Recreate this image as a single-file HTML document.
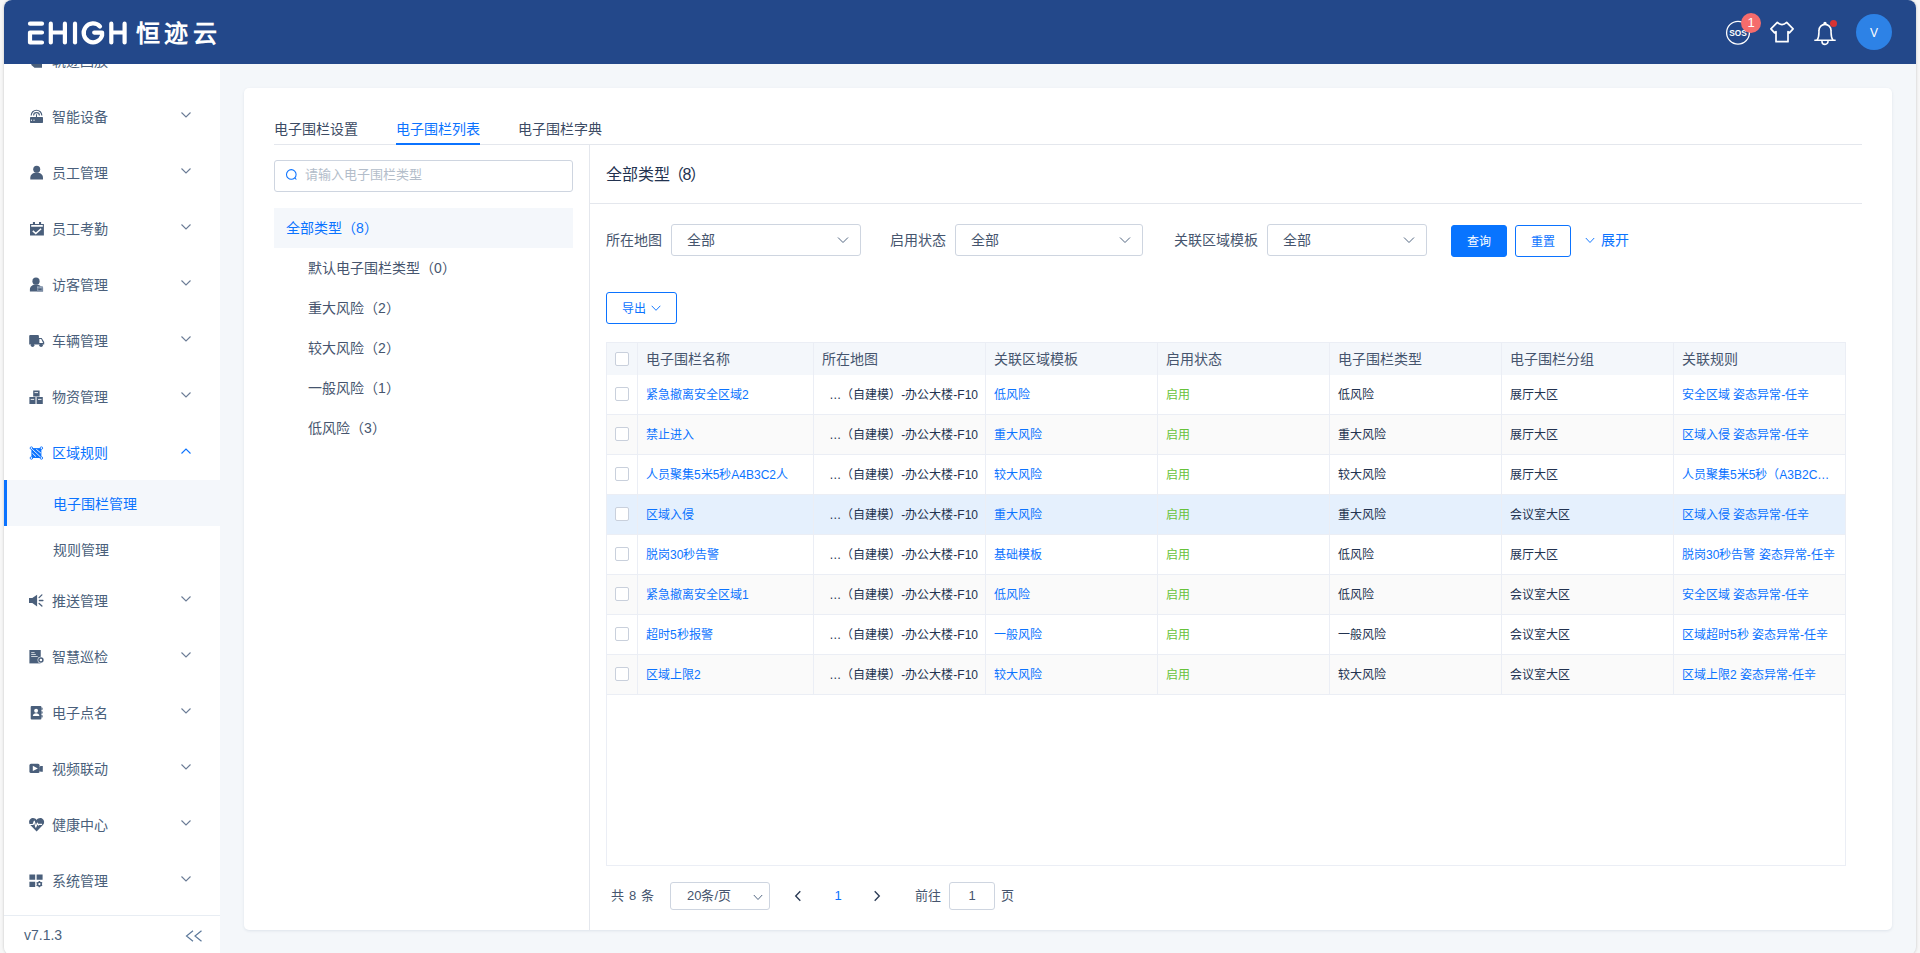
<!DOCTYPE html>
<html lang="zh-CN">
<head>
<meta charset="utf-8">
<title>电子围栏管理</title>
<style>
*{box-sizing:border-box;margin:0;padding:0}
html,body{width:1920px;height:953px;overflow:hidden;background:#f7f7f7;font-family:"Liberation Sans",sans-serif;font-size:14px;color:#303133}
.abs{position:absolute}
#frame{position:absolute;left:4px;top:0;width:1912px;height:955px;border-radius:8px;background:#f4f7fa;box-shadow:0 0 3px rgba(0,0,0,.22)}
/* header */
#hd{position:absolute;left:4px;top:0;width:1912px;height:64px;background:#23488a;border-radius:8px 8px 0 0;z-index:5}
#logo{position:absolute;left:24px;top:21px}
#brand{position:absolute;left:132px;top:17px;font-size:24px;line-height:34px;font-weight:bold;color:#fff;letter-spacing:4.4px;white-space:nowrap}
.hi{position:absolute;top:0}
#sosb{position:absolute;left:1737px;top:13px;width:20px;height:20px;border-radius:10px;background:#f56c6c;color:#fff;font-size:13px;line-height:20px;text-align:center}
#avatar{position:absolute;left:1852px;top:14px;width:36px;height:36px;border-radius:18px;background:#2d82e6;color:#fff;font-size:12px;line-height:38px;text-align:center}
#belldot{position:absolute;left:1826px;top:20px;width:7px;height:7px;border-radius:4px;background:#d73434}
/* sidebar */
#sb{position:absolute;left:4px;top:0;width:216px;height:955px;background:#fff;border-radius:8px 0 0 8px;z-index:1;overflow:hidden}
.mi{position:absolute;left:0;width:216px;height:56px;line-height:56px;color:#4a5f7b;font-size:14px}
.mi .ic{position:absolute;left:25px;top:20px;width:16px;height:16px}
.mi .tx{position:absolute;left:48px;top:0;white-space:nowrap}
.mi .ar{position:absolute;left:176px;top:22px;width:12px;height:8px}
.mi.on{color:#0b73ff}
.smi{position:absolute;left:0;width:216px;height:46px;line-height:48px;color:#4a5f7b;font-size:14px;padding-left:49px}
.smi.on{background:#f4f7fb;color:#0b73ff;border-left:3px solid #0b73ff;padding-left:46px}
#sbft{position:absolute;left:0;top:915px;width:216px;height:40px;border-top:1px solid #e8edf3;color:#4a5f7b;font-size:14px;line-height:39px;padding-left:20px}
/* card */
#card{position:absolute;left:244px;top:88px;width:1648px;height:842px;background:#fff;border-radius:5px;box-shadow:0 1px 3px rgba(30,60,100,.10)}
.tab{position:absolute;top:31px;height:20px;line-height:20px;font-size:14px;color:#3c4b64;white-space:nowrap}
.tab.on{color:#0b73ff}
#search{position:absolute;left:30px;top:72px;width:299px;height:32px;border:1px solid #ced5e0;border-radius:3px;background:#fff}
#search span{position:absolute;left:30px;top:0;line-height:28px;font-size:13px;color:#b3bdca;white-space:nowrap}
#troot{position:absolute;left:30px;top:120px;width:299px;height:40px;background:#f4f7fb;color:#0b73ff;font-size:14px;line-height:40px;padding-left:12px}
.tn{position:absolute;left:64px;height:40px;line-height:40px;font-size:14px;color:#46556e;white-space:nowrap}
#ttl{position:absolute;left:362px;top:73px;height:28px;line-height:28px;font-size:16px;color:#22324f;white-space:nowrap}
.lb{position:absolute;top:136px;height:32px;line-height:32px;font-size:14px;color:#46556e;white-space:nowrap}
.sel{position:absolute;top:136px;height:32px;border:1px solid #ced5e0;border-radius:3px;line-height:30px;font-size:14px;color:#46556e;padding-left:15px}
.sel .sa{position:absolute;right:11px;top:11px;width:12px;height:8px}
.btn{position:absolute;height:32px;border-radius:3px;font-size:12px;line-height:33px;text-align:center;white-space:nowrap}
.btn.pri{background:#0874ff;color:#fff;border:1px solid #0874ff}
.btn.pln{background:#fff;color:#0b73ff;border:1px solid #0b73ff}
#expand{position:absolute;left:1341px;top:137px;height:32px;line-height:30px;font-size:14px;color:#0b73ff;white-space:nowrap}
#tbw{position:absolute;left:362px;top:254px;width:1240px;height:524px;border-bottom:1px solid #ebeef5;border-left:1px solid #ebeef5}
#tbw table{position:absolute;left:0;top:0;width:1239px;border-collapse:separate;border-spacing:0;table-layout:fixed}
#tbw th{height:33px;background:#f4f7fb;font-weight:normal;font-size:14px;color:#46556e;text-align:left;padding:0 8px 2px 8px;border-right:1px solid #ebeef5;border-top:1px solid #ebeef5;white-space:nowrap;overflow:hidden}
#tbw td{height:40px;font-size:12px;color:#22324f;padding:0 8px 2px 8px;border-right:1px solid #ebeef5;border-bottom:1px solid #ebeef5;white-space:nowrap;overflow:hidden}
#tbw tr.st td{background:#fafafa}
#tbw tr.hv td{background:#e5f0fd}
#tbw td a{color:#0b73ff}
#tbw td.mp{text-align:right;padding-right:7px}
#tbw .ok{color:#67c23a}
#tbw th.ck{padding:0 0 3px 0;text-align:center}
#tbw td.ck{padding:0 0 1px 0;text-align:center}
.cb{display:inline-block;width:14px;height:14px;border:1px solid #c9d0dc;border-radius:2px;background:#fff;vertical-align:middle}
#pg{position:absolute;left:0;top:794px;width:1648px;height:28px;line-height:28px;font-size:13px;color:#46556e;white-space:nowrap}
.psel{position:absolute;left:426px;top:0;width:100px;height:28px;border:1px solid #ced5e0;border-radius:3px;line-height:26px;padding-left:16px}
.pin{position:absolute;left:705px;top:0;width:46px;height:28px;border:1px solid #ced5e0;border-radius:3px;line-height:26px;text-align:center}
.cnt{letter-spacing:-1.500px;margin-left:-2px}
</style>
</head>
<body>
<div id="frame"></div>
<div id="sb">
  <div class="mi" style="top:33px"><svg class="ic" viewBox="0 0 16 16"><path d="M2.300 9.500H5v1.500h8v3.700H5.500L2.300 12z" fill="#4a5f7b"/></svg><span class="tx">轨迹回放</span></div>
  <div class="mi" style="top:89px"><svg class="ic" viewBox="0 0 16 16"><rect x="1" y="8" width="13" height="6" rx=".700" fill="#4a5f7b"/><path d="M2.400 10.600v1.400M5 10.600v1.400" stroke="#fff" stroke-width=".900"/><path d="M7.500 5.200V8" stroke="#4a5f7b" stroke-width="1.100"/><path d="M2.200 6.500A5.300 5.300 0 0 1 12.800 6.500M4.600 6.500A2.900 2.900 0 0 1 10.400 6.500" stroke="#4a5f7b" stroke-width="1.150" fill="none"/></svg><span class="tx">智能设备</span><svg class="ar" viewBox="0 0 12 8"><path d="M1.500 1.500L6 6l4.500-4.500" stroke="#6b7c96" stroke-width="1.100" fill="none"/></svg></div>
  <div class="mi" style="top:145px"><svg class="ic" viewBox="0 0 16 16"><circle cx="7.700" cy="4.200" r="3.500" fill="#4a5f7b"/><path d="M1.300 14.400v-1.600c0-3.200 2.800-5.300 6.400-5.300s6.300 2.100 6.300 5.300v1.600z" fill="#4a5f7b"/></svg><span class="tx">员工管理</span><svg class="ar" viewBox="0 0 12 8"><path d="M1.500 1.500L6 6l4.500-4.500" stroke="#6b7c96" stroke-width="1.100" fill="none"/></svg></div>
  <div class="mi" style="top:201px"><svg class="ic" viewBox="0 0 16 16"><path d="M1 3h13.900v11.400H1z" fill="#4a5f7b"/><path d="M3.900 .900H6V3.500H3.900zM10 .900h2.100V3.500H10z" fill="#4a5f7b"/><path d="M2.200 4.850H13.800" stroke="#fff" stroke-width="1.700"/><path d="M3.800 9.900L6.800 12.600L12.100 7.800" stroke="#fff" stroke-width="1.500" fill="none"/></svg><span class="tx">员工考勤</span><svg class="ar" viewBox="0 0 12 8"><path d="M1.500 1.500L6 6l4.500-4.500" stroke="#6b7c96" stroke-width="1.100" fill="none"/></svg></div>
  <div class="mi" style="top:257px"><svg class="ic" viewBox="0 0 16 16"><circle cx="7" cy="4.200" r="3.600" fill="#4a5f7b"/><path d="M.900 14.600v-2c0-3 2.600-5 6.100-5 2 0 3.600.600 4.800 1.700l2.300 1.300v4z" fill="#4a5f7b"/><rect x="8" y="9.300" width="5.900" height="5.100" fill="#7f90a8"/><path d="M8 10.100h5.900" stroke="#c9d3e0" stroke-width=".800" stroke-dasharray=".800 .700"/><rect x="9.400" y="11.600" width="3.100" height="1.500" fill="#4a5f7b"/></svg><span class="tx">访客管理</span><svg class="ar" viewBox="0 0 12 8"><path d="M1.500 1.500L6 6l4.500-4.500" stroke="#6b7c96" stroke-width="1.100" fill="none"/></svg></div>
  <div class="mi" style="top:313px"><svg class="ic" viewBox="0 0 16 16"><path d="M.200 3a1 1 0 0 1 1-1h7.700a1 1 0 0 1 1 1v2h2.800l2.500 4v2.600H.200z" fill="#4a5f7b"/><path d="M10.400 6h1.800l1.900 3.900h-3.700z" fill="#fff"/><circle cx="3.600" cy="12.200" r="1.800" fill="#4a5f7b"/><circle cx="12.100" cy="12.200" r="1.800" fill="#4a5f7b"/></svg><span class="tx">车辆管理</span><svg class="ar" viewBox="0 0 12 8"><path d="M1.500 1.500L6 6l4.500-4.500" stroke="#6b7c96" stroke-width="1.100" fill="none"/></svg></div>
  <div class="mi" style="top:369px"><svg class="ic" viewBox="0 0 16 16"><path d="M4.200 1.400h6.400v6.100H4.200zM.400 8.100h6.100v6.800H.400zM7.600 8.100h6.200v6.800H7.600z" fill="#4a5f7b"/><path d="M5.500 3.600H9M1.700 10.400h3.500M9 10.400h3.500" stroke="#fff" stroke-width=".900"/></svg><span class="tx">物资管理</span><svg class="ar" viewBox="0 0 12 8"><path d="M1.500 1.500L6 6l4.500-4.500" stroke="#6b7c96" stroke-width="1.100" fill="none"/></svg></div>
  <div class="mi on" style="top:425px"><svg class="ic" viewBox="0 0 16 16"><path d="M2.400 3.100H12.400V13H2.400z" fill="#0b73ff"/><path d="M2.600 3.600L12.100 12.600M7.300 4.300L11.900 8.100M3.300 8.100L6.900 11.600" stroke="#fff" stroke-width=".900"/><circle cx="2.400" cy="3.100" r="1.250" fill="#fff" stroke="#0b73ff" stroke-width=".900"/><circle cx="12.400" cy="3.100" r="1.250" fill="#fff" stroke="#0b73ff" stroke-width=".900"/><circle cx="2.400" cy="13" r="1.250" fill="#fff" stroke="#0b73ff" stroke-width=".900"/><circle cx="12.400" cy="13" r="1.250" fill="#fff" stroke="#0b73ff" stroke-width=".900"/></svg><span class="tx">区域规则</span><svg class="ar" viewBox="0 0 12 8"><path d="M1.500 6.500L6 2l4.500 4.500" stroke="#0b73ff" stroke-width="1.100" fill="none"/></svg></div>
  <div class="smi on" style="top:480px">电子围栏管理</div>
  <div class="smi" style="top:526px">规则管理</div>
  <div class="mi" style="top:573px"><svg class="ic" viewBox="0 0 16 16"><path d="M0 5.100H3.300L8.100 1.800V13.600L3.300 9.900H0z" fill="#4a5f7b"/><path d="M10.100 4.600L12.900 1.900M10.400 7.500H13.900M10.100 10.500L12.900 13" stroke="#4a5f7b" stroke-width="1.300" stroke-linecap="round"/></svg><span class="tx">推送管理</span><svg class="ar" viewBox="0 0 12 8"><path d="M1.500 1.500L6 6l4.500-4.500" stroke="#6b7c96" stroke-width="1.100" fill="none"/></svg></div>
  <div class="mi" style="top:629px"><svg class="ic" viewBox="0 0 16 16"><path d="M.400 1H11.750V14.400H.400z" fill="#4a5f7b"/><path d="M2.200 3.600H5.600M2.200 5.500H6.800M2.200 7.500H8.700" stroke="#fff" stroke-width=".900" opacity=".8"/><circle cx="11.900" cy="11.100" r="3.300" fill="#fff"/><circle cx="11.900" cy="11.100" r="2" fill="none" stroke="#4a5f7b" stroke-width="1.500"/></svg><span class="tx">智慧巡检</span><svg class="ar" viewBox="0 0 12 8"><path d="M1.500 1.500L6 6l4.500-4.500" stroke="#6b7c96" stroke-width="1.100" fill="none"/></svg></div>
  <div class="mi" style="top:685px"><svg class="ic" viewBox="0 0 16 16"><rect x="1.700" y="1" width="10.700" height="13.400" rx=".900" fill="#4a5f7b"/><path d="M12.400 2.500h.500a.700.700 0 0 1 .700.700v1.100a.700.700 0 0 1-.700.700h-.500zM12.400 6.300h.500a.700.700 0 0 1 .700.700v1.100a.700.700 0 0 1-.700.700h-.500zM12.400 10.100h.500a.700.700 0 0 1 .700.700v1.100a.700.700 0 0 1-.700.700h-.500z" fill="#4a5f7b"/><circle cx="7.100" cy="5.700" r="1.950" fill="#fff"/><path d="M3.800 11.100c0-1.900 1.500-2.900 3.300-2.900s3.300 1 3.300 2.900z" fill="#fff"/></svg><span class="tx">电子点名</span><svg class="ar" viewBox="0 0 12 8"><path d="M1.500 1.500L6 6l4.500-4.500" stroke="#6b7c96" stroke-width="1.100" fill="none"/></svg></div>
  <div class="mi" style="top:741px"><svg class="ic" viewBox="0 0 16 16"><rect x=".400" y="2.800" width="10.200" height="9.300" rx="1.600" fill="#4a5f7b"/><path d="M10.300 6.300L11.500 4.900H13.800V10.800H11.500L10.300 9.500z" fill="#4a5f7b"/><path d="M3.800 4.800V10.100L8.850 7.500z" fill="#fff"/></svg><span class="tx">视频联动</span><svg class="ar" viewBox="0 0 12 8"><path d="M1.500 1.500L6 6l4.500-4.500" stroke="#6b7c96" stroke-width="1.100" fill="none"/></svg></div>
  <div class="mi" style="top:797px"><svg class="ic" viewBox="0 0 16 16"><path d="M7.600 14.400L1.300 8.100C-.600 6.100-.300 2.700 2.100 1.500C4.100.500 6.400 1.200 7.600 2.900C8.800 1.200 11.100.500 13.100 1.500C15.500 2.700 15.800 6.100 13.900 8.100Z" fill="#4a5f7b"/><path d="M.300 7.500H4.100L5.300 4.200L6.800 10.100L8.350 6.100L9.400 8.100L10 7.300H13.100" stroke="#fff" stroke-width="1.150" fill="none" stroke-linejoin="round"/></svg><span class="tx">健康中心</span><svg class="ar" viewBox="0 0 12 8"><path d="M1.500 1.500L6 6l4.500-4.500" stroke="#6b7c96" stroke-width="1.100" fill="none"/></svg></div>
  <div class="mi" style="top:853px"><svg class="ic" viewBox="0 0 16 16"><path d="M.400 1.500h5.800v5.300H.400zM7.600 1.500h6v5.300h-6zM.400 8.700h5.800V14H.400z" fill="#4a5f7b"/><circle cx="10.400" cy="11.100" r="1.900" fill="none" stroke="#4a5f7b" stroke-width="1.500"/><path d="M10.400 7.900v6.400M7.600 9.500l5.600 3.200M7.600 12.700l5.600-3.200" stroke="#4a5f7b" stroke-width="1.300" stroke-dasharray="1.200 4"/></svg><span class="tx">系统管理</span><svg class="ar" viewBox="0 0 12 8"><path d="M1.500 1.500L6 6l4.500-4.500" stroke="#6b7c96" stroke-width="1.100" fill="none"/></svg></div>
  <div id="sbft">v7.1.3<svg style="position:absolute;left:181px;top:13px" width="18" height="14" viewBox="0 0 18 14"><path d="M8 1.700L1.500 7 8 12.300M16.500 1.700L10 7l6.500 5.300" stroke="#5e7a9c" stroke-width="1.200" fill="none"/></svg></div>
</div>
<div id="hd">
  <svg class="abs" style="left:20px;top:16px" width="110" height="34" viewBox="24 16 110 34" fill="none" stroke="#fff" stroke-width="4.200" stroke-linecap="round" stroke-linejoin="round">
    <path d="M30 23.700H42"/>
    <path d="M42 32.500H30V42.500H42"/>
    <path d="M50.800 23.700V42.500M64.900 23.700V42.500M50.800 32.500H64.900"/>
    <path d="M75 23.700V42.500"/>
    <path d="M100 26.500A9.400 9.400 0 1 0 102.100 35.500V32.600H94.200"/>
    <path d="M111.300 23.700V42.500M124.600 23.700V42.500M111.300 32.500H124.600"/>
  </svg>
  <div id="brand">恒迹云</div>

  <svg class="abs" style="left:1720px;top:18px" width="30" height="30" viewBox="1724 18 30 30"><circle cx="1738" cy="32.700" r="11.400" fill="none" stroke="#fff" stroke-width="1.300"/><text x="1738" y="36" font-family="Liberation Sans, sans-serif" font-size="9.600" font-weight="bold" fill="#fff" text-anchor="middle" textLength="17.600" lengthAdjust="spacingAndGlyphs">SOS</text></svg>
  <div id="sosb">1</div>

  <svg class="abs" style="left:1764px;top:18px" width="28" height="28" viewBox="1768 18 28 28" fill="none" stroke="#fff" stroke-width="1.700" stroke-linejoin="round"><path d="M1777.300 22.400L1770.900 28.800L1774.600 32.800L1776 31.600V41.700H1788V31.600L1789.400 32.800L1793.100 28.800L1786.700 22.400Q1782 26.800 1777.300 22.400Z"/></svg>

  <svg class="abs" style="left:1808px;top:18px" width="28" height="30" viewBox="1812 18 28 30" fill="none" stroke="#fff" stroke-width="1.600" stroke-linejoin="round" stroke-linecap="round"><path d="M1817 40.200C1819.400 37 1818.800 33.500 1819 30.400A6 6 0 0 1 1831 30.400C1831.200 33.500 1830.600 37 1833 40.200"/><path d="M1814.900 40.300H1835.100"/><path d="M1822 41.400A3 3 0 0 0 1828 41.400"/><circle cx="1825" cy="23.400" r=".9" fill="#fff"/></svg>
  <div id="belldot"></div>
  <div id="avatar">V</div>
</div>
<div id="card">
  <!-- tabs -->
  <div class="tab" style="left:30px">电子围栏设置</div>
  <div class="tab on" style="left:152px">电子围栏列表</div>
  <div class="tab" style="left:274px">电子围栏字典</div>
  <div class="abs" style="left:30px;top:56px;width:1588px;height:1px;background:#e4e7ed"></div>
  <div class="abs" style="left:152px;top:55px;width:84px;height:2px;background:#0b73ff"></div>

  <!-- left tree -->
  <div id="search"><svg class="abs" style="left:10px;top:7px" width="14" height="14" viewBox="0 0 14 14"><circle cx="6.300" cy="6.400" r="4.800" fill="none" stroke="#0b73ff" stroke-width="1.050"/><path d="M9.700 9.800l1.700 1.700" stroke="#0b73ff" stroke-width="1.050"/></svg><span>请输入电子围栏类型</span></div>
  <div id="troot">全部类型（8）</div>
  <div class="tn" style="top:160px">默认电子围栏类型（0）</div>
  <div class="tn" style="top:200px">重大风险（2）</div>
  <div class="tn" style="top:240px">较大风险（2）</div>
  <div class="tn" style="top:280px">一般风险（1）</div>
  <div class="tn" style="top:320px">低风险（3）</div>
  <div class="abs" style="left:345px;top:57px;width:1px;height:785px;background:#e4e7ed"></div>

  <!-- right -->
  <div id="ttl">全部类型<span class="cnt">（8）</span></div>
  <div class="abs" style="left:346px;top:115px;width:1272px;height:1px;background:#e4e7ed"></div>

  <div class="lb" style="left:362px">所在地图</div>
  <div class="sel" style="left:427px;width:190px">全部<svg class="sa" viewBox="0 0 12 8"><path d="M1 1.500L6 6.500l5-5" stroke="#4a5f7b" stroke-width=".950" fill="none"/></svg></div>
  <div class="lb" style="left:646px">启用状态</div>
  <div class="sel" style="left:711px;width:188px">全部<svg class="sa" viewBox="0 0 12 8"><path d="M1 1.500L6 6.500l5-5" stroke="#4a5f7b" stroke-width=".950" fill="none"/></svg></div>
  <div class="lb" style="left:930px">关联区域模板</div>
  <div class="sel" style="left:1023px;width:160px">全部<svg class="sa" viewBox="0 0 12 8"><path d="M1 1.500L6 6.500l5-5" stroke="#4a5f7b" stroke-width=".950" fill="none"/></svg></div>
  <div class="btn pri" style="left:1207px;top:137px;width:56px">查询</div>
  <div class="btn pln" style="left:1271px;top:137px;width:56px">重置</div>
  <div id="expand"><svg width="10" height="7" viewBox="0 0 10 7" style="margin-right:6px;position:relative;top:-1px"><path d="M.800 1l4.200 4.500L9.200 1" stroke="#0b73ff" stroke-width=".950" fill="none"/></svg>展开</div>

  <div class="btn pln" style="left:362px;top:204px;width:71px">导出<svg width="10" height="7" viewBox="0 0 10 7" style="margin-left:5px;position:relative;top:-1px"><path d="M.700 .800l4.300 4.500L9.300 .800" stroke="#0b73ff" stroke-width=".950" fill="none"/></svg></div>

  <div id="tbw">
    <table>
      <colgroup><col style="width:31px"><col style="width:176px"><col style="width:172px"><col style="width:172px"><col style="width:172px"><col style="width:172px"><col style="width:172px"><col style="width:172px"></colgroup>
      <thead><tr><th class="ck"><i class="cb"></i></th><th>电子围栏名称</th><th>所在地图</th><th>关联区域模板</th><th>启用状态</th><th>电子围栏类型</th><th>电子围栏分组</th><th>关联规则</th></tr></thead>
      <tbody>
      <tr class=""><td class="ck"><i class="cb"></i></td><td><a>紧急撤离安全区域2</a></td><td class="mp">…（自建模）-办公大楼-F10</td><td><a>低风险</a></td><td><span class="ok">启用</span></td><td>低风险</td><td>展厅大区</td><td><a>安全区域 姿态异常-任辛</a></td></tr>
      <tr class="st"><td class="ck"><i class="cb"></i></td><td><a>禁止进入</a></td><td class="mp">…（自建模）-办公大楼-F10</td><td><a>重大风险</a></td><td><span class="ok">启用</span></td><td>重大风险</td><td>展厅大区</td><td><a>区域入侵 姿态异常-任辛</a></td></tr>
      <tr class=""><td class="ck"><i class="cb"></i></td><td><a>人员聚集5米5秒A4B3C2人</a></td><td class="mp">…（自建模）-办公大楼-F10</td><td><a>较大风险</a></td><td><span class="ok">启用</span></td><td>较大风险</td><td>展厅大区</td><td><a>人员聚集5米5秒（A3B2C…</a></td></tr>
      <tr class="st hv"><td class="ck"><i class="cb"></i></td><td><a>区域入侵</a></td><td class="mp">…（自建模）-办公大楼-F10</td><td><a>重大风险</a></td><td><span class="ok">启用</span></td><td>重大风险</td><td>会议室大区</td><td><a>区域入侵 姿态异常-任辛</a></td></tr>
      <tr class=""><td class="ck"><i class="cb"></i></td><td><a>脱岗30秒告警</a></td><td class="mp">…（自建模）-办公大楼-F10</td><td><a>基础模板</a></td><td><span class="ok">启用</span></td><td>低风险</td><td>展厅大区</td><td><a>脱岗30秒告警 姿态异常-任辛</a></td></tr>
      <tr class="st"><td class="ck"><i class="cb"></i></td><td><a>紧急撤离安全区域1</a></td><td class="mp">…（自建模）-办公大楼-F10</td><td><a>低风险</a></td><td><span class="ok">启用</span></td><td>低风险</td><td>会议室大区</td><td><a>安全区域 姿态异常-任辛</a></td></tr>
      <tr class=""><td class="ck"><i class="cb"></i></td><td><a>超时5秒报警</a></td><td class="mp">…（自建模）-办公大楼-F10</td><td><a>一般风险</a></td><td><span class="ok">启用</span></td><td>一般风险</td><td>会议室大区</td><td><a>区域超时5秒 姿态异常-任辛</a></td></tr>
      <tr class="st"><td class="ck"><i class="cb"></i></td><td><a>区域上限2</a></td><td class="mp">…（自建模）-办公大楼-F10</td><td><a>较大风险</a></td><td><span class="ok">启用</span></td><td>较大风险</td><td>会议室大区</td><td><a>区域上限2 姿态异常-任辛</a></td></tr>
      </tbody>
    </table>
  </div>

  <div class="abs" style="left:1601px;top:254px;width:1px;height:524px;background:#ebeef5"></div>

  <!-- pagination -->
  <div id="pg">
    <span class="abs" style="left:367px;word-spacing:1.500px">共 8 条</span>
    <div class="psel">20条/页<svg class="abs" style="left:82px;top:11px" width="10" height="7" viewBox="0 0 10 7"><path d="M.800 1l4.200 4.500L9.200 1" stroke="#4a5f7b" stroke-width=".950" fill="none"/></svg></div>
    <svg class="abs" style="left:550px;top:8px" width="8" height="12" viewBox="0 0 8 12"><path d="M6.300 1.200L1.700 6l4.600 4.800" stroke="#2b3b55" stroke-width="1.350" fill="none"/></svg>
    <span class="abs" style="left:580px;width:28px;text-align:center;color:#0b73ff">1</span>
    <svg class="abs" style="left:629px;top:8px" width="8" height="12" viewBox="0 0 8 12"><path d="M1.700 1.200L6.300 6l-4.600 4.800" stroke="#2b3b55" stroke-width="1.350" fill="none"/></svg>
    <span class="abs" style="left:671px">前往</span>
    <div class="pin">1</div>
    <span class="abs" style="left:757px">页</span>
  </div>
</div>
</body>
</html>
